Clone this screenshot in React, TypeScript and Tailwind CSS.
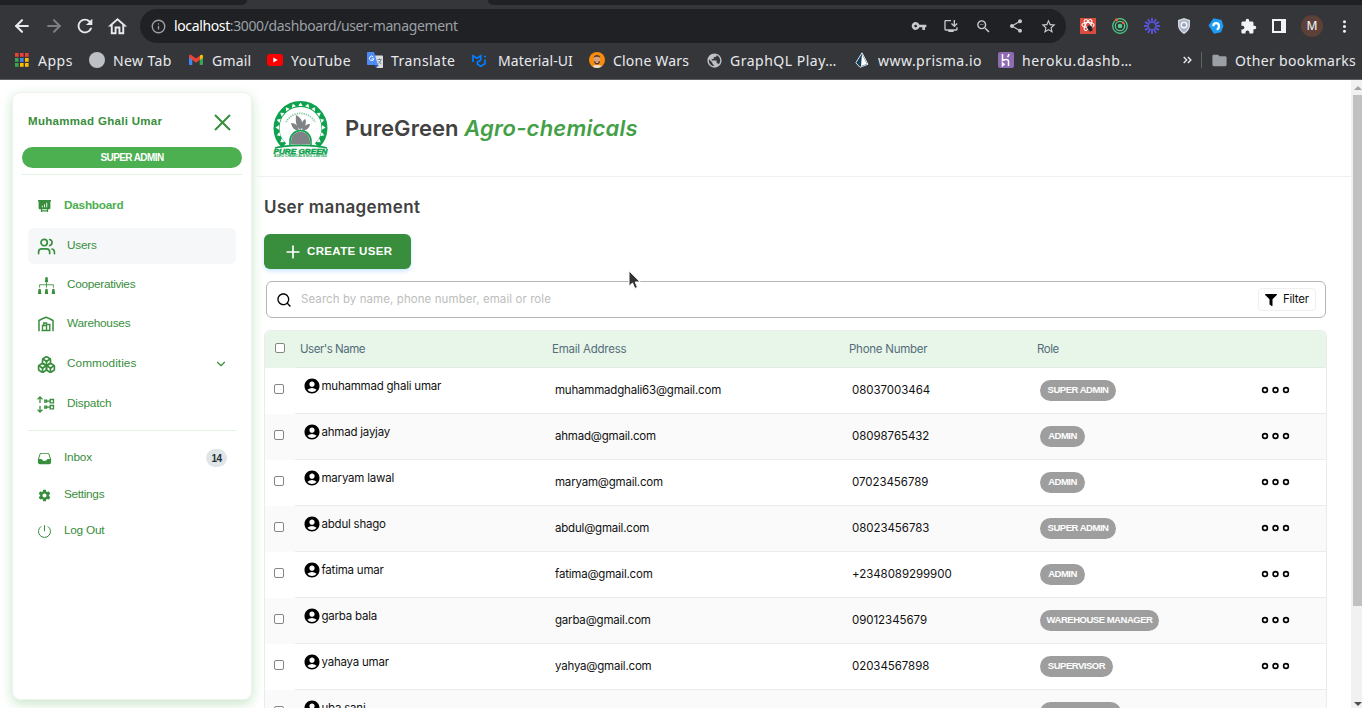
import React from 'react';
import { ArrowLeft, ArrowRight, Boxes, ChevronDown, Info, Plus, Users } from 'lucide-react';
import {
  MdAccountCircle, MdExtension, MdFolder, MdInstallDesktop, MdMoreVert,
  MdOutlineHome, MdPublic, MdRefresh, MdShare, MdStarBorder, MdVpnKey, MdZoomOut,
} from 'react-icons/md';
import { HiInbox } from 'react-icons/hi2';
import { FaFilter } from 'react-icons/fa';
import { IoSettingsSharp } from 'react-icons/io5';
import { RiSearchLine } from 'react-icons/ri';

const AppsIcon = () => (
  <svg width="14" height="14" viewBox="0 0 14 14">
    {['#ea4335', '#ea4335', '#ea4335', '#34a853', '#4285f4', '#fbbc04', '#34a853', '#fbbc04', '#fbbc04'].map((c, i) => (
      <rect key={i} x={(i % 3) * 5} y={Math.floor(i / 3) * 5} width="3.6" height="3.8" fill={c} />
    ))}
  </svg>
);

const GmailIcon = () => (
  <svg width="16" height="16" viewBox="0 0 16 16">
    <path d="M1 4v8.2c0 .5.3.8.8.8H4.300V6.600z" fill="#4285f4" />
    <path d="M15 4v8.2c0 .5-.3.8-.8.8H11.700V6.600z" fill="#34a853" />
    <path d="M1 4.2C1 2.900 2.600 2.400 3.600 3.200L8 6.600l4.400-3.400V7.200L8 10.800 3.800 7.500 1 5.200z" fill="#ea4335" />
    <path d="M12 3.400c1.100-1 3-.6 3 .8v1.500l-3 2.200z" fill="#fbbc04" />
  </svg>
);

const YouTubeIcon = () => (
  <svg width="16" height="12" viewBox="0 0 16 12">
    <rect width="16" height="12" rx="3" fill="#f00" />
    <path d="M6.300 3.400v5.200L10.700 6z" fill="#fff" />
  </svg>
);

const TranslateIcon = () => (
  <svg width="16" height="16" viewBox="0 0 16 16">
    <path d="M6 3.500h9.300c.4 0 .7.300.7.700v11c0 .4-.3.800-.7.800H9.500z" fill="#dadce0" />
    <path d="M8 13h4l-3 3z" fill="#3b5bbd" />
    <path d="M.800 0H7l4 13H.800C.300 13 0 12.700 0 12.300V.800C0 .300.300 0 .800 0z" fill="#4c8bf5" />
    <path d="M6.300 4.900a2.200 2.200 0 1 0 .5 1.900H4.700" fill="none" stroke="#fff" strokeWidth="1" />
    <path d="M10.500 7.500h4M12.500 6.500v1M14 7.800c-.5 2-1.500 3-2.700 4M11.500 9l2.800 3" fill="none" stroke="#71808d" strokeWidth=".9" />
  </svg>
);

const MuiIcon = () => (
  <svg width="15" height="13" viewBox="0 0 15 13" fill="none" stroke="#007fff" strokeWidth="1.700">
    <path d="M1 8V1.800l4 2.500 3.700-2.500V6L5.500 8v2.300l3.300 1.900 4.200-2.400V5.500" />
    <path d="M12 2.500h2" />
  </svg>
);

const FaceIcon = () => (
  <svg width="16" height="16" viewBox="0 0 16 16">
    <circle cx="8" cy="8" r="8" fill="#f98c0a" />
    <path d="M3.500 14.500c1-2 8-2 9 0C10.500 16.400 5.500 16.400 3.500 14.500z" fill="#e8dfd8" />
    <ellipse cx="8" cy="7.500" rx="3.200" ry="4.800" fill="#d8a17f" />
    <path d="M4.700 6C4.300 2 11.700 2 11.300 6 10.600 4.400 5.400 4.400 4.700 6zM4.900 9c.2 4.800 6 4.800 6.200 0-1 1.100-5.200 1.100-6.200 0z" fill="#593624" />
    <path d="M6.700 10.300h2.600" stroke="#fff" strokeWidth=".8" />
  </svg>
);

const PrismaIcon = () => (
  <svg width="14" height="16" viewBox="0 0 14 16">
    <path d="M7 .8 13 12.300 5 15.300.8 10.800z" fill="#16405b" stroke="#dbe5ea" strokeWidth="1" />
    <path d="M7 2 12 12 6 14z" fill="#fff" />
  </svg>
);

const HerokuIcon = () => (
  <svg width="16" height="16" viewBox="0 0 16 16">
    <rect width="16" height="16" rx="2" fill="#8f6bb3" />
    <path d="M4.500 2v6.700c3-1.500 6-1.700 6 .6V14M10.800 2c0 1.300-.5 2.200-1.300 3M4.500 11v2.600l1.600-1.300z" fill="none" stroke="#fff" strokeWidth="1.500" />
  </svg>
);

const BugExtension = () => (
  <svg width="16" height="16" viewBox="0 0 16 16">
    <rect width="16" height="16" fill="#dd4b3e" />
    <g fill="none" stroke="#fff" strokeWidth="1.100">
      <ellipse cx="8" cy="7" rx="6" ry="2.500" />
      <ellipse cx="8" cy="7" rx="6" ry="2.500" transform="rotate(60 8 7)" />
      <ellipse cx="8" cy="7" rx="6" ry="2.500" transform="rotate(120 8 7)" />
    </g>
    <ellipse cx="10" cy="10.300" rx="2.300" ry="3" fill="#222" transform="rotate(-35 10 10.300)" />
    <path d="M6.500 9l6 4M7.500 13l5-5M10 7v7" stroke="#222" strokeWidth=".7" />
  </svg>
);

const RingsExtension = () => (
  <svg width="16" height="16" viewBox="0 0 16 16" fill="none" stroke="#4fd18b">
    <circle cx="8" cy="8" r="7.300" strokeWidth="1.200" />
    <circle cx="8" cy="8" r="4.700" strokeWidth="1.200" />
    <circle cx="8" cy="8" r="2.300" fill="#4fd18b" stroke="none" />
    <circle cx="4.500" cy="1.700" r="1.500" fill="#f06033" stroke="none" />
    <circle cx="11.200" cy="4.800" r="1.300" fill="#f06033" stroke="none" />
  </svg>
);

const BurstExtension = () => (
  <svg width="16" height="16" viewBox="0 0 16 16" stroke="#5b57ea" strokeWidth="1.700">
    {[0, 30, 60, 90, 120, 150, 180, 210, 240, 270, 300, 330].map((a) => (
      <path key={a} d="M8 0v4.900" transform={`rotate(${a} 8 8)`} />
    ))}
  </svg>
);

const ShieldExtension = () => (
  <svg width="14" height="16" viewBox="0 0 14 16">
    <path d="M7 0 13 2v5c0 4-2.500 7-6 9-3.500-2-6-5-6-9V2z" fill="#d5d9e2" />
    <path d="M7 1.500 11.700 3v4c0 3.200-2 5.800-4.700 7.500C4.300 12.800 2.300 10.200 2.300 7V3z" fill="#a9b3c5" />
    <circle cx="7" cy="7" r="2.800" fill="#9aa6ba" stroke="#f5f6fa" strokeWidth="1.400" />
  </svg>
);

const BlueExtension = () => (
  <svg width="16" height="16" viewBox="0 0 16 16">
    <path d="M5.500.3 13.500 2l2 6-2.500 6.300L6 15.700.500 7.500z" fill="#1e9cf5" />
    <path d="M5.300 8.300C5.300 4 11 4 11 8.300c0 1.700-.8 2.800-2.300 3" fill="none" stroke="#fff" strokeWidth="2.200" />
  </svg>
);

const BoardIcon = () => (
  <svg width="13" height="13" viewBox="0 0 13 13" fill="none">
    <path d="M0 0h13v1.300h-.6V8c0 .8-.5 1.300-1.300 1.300H1.900C1.100 9.300.6 8.800.6 8V1.300H0z" fill="#388e3c" />
    <path d="M4.300 7.300V5.700M6.500 7.300V4.300M8.700 7.300V2.700" stroke="#fff" strokeWidth=".9" />
    <path d="M3.500 9v3M9.500 9v3M3.500 10.800h6" stroke="#388e3c" strokeWidth="1.200" />
  </svg>
);

const PEOPLE = [[8, 0], [1.5, 11], [8, 11], [14.5, 11]];
const TreeIcon = () => (
  <svg width="17" height="17" viewBox="0 0 16 16" fill="#388e3c">
    {PEOPLE.map(([x, y]) => (
      <path key={`${x}-${y}`} d={`M${x - 1.2} ${y + 1.2}a1.2 1.2 0 0 1 2.4 0v.8l.4 3h-3.200l.4-3z`} />
    ))}
    <path d="M8 5v5M1.500 10V7.300h13V10" fill="none" stroke="#388e3c" strokeWidth=".8" />
  </svg>
);

const WarehouseIcon = () => (
  <svg width="16" height="16" viewBox="0 0 16 16" fill="none" stroke="#388e3c">
    <path d="M1 15.300V4.500C3 3.200 5.500 2 8 1.200c2.500.8 5 2 7 3.300v10.800" strokeWidth="1.500" />
    <path d="M4.500 9.500h4v5h-4zM8.500 8.500h3.300v6H8.500M5.800 9.500V7h2.700v1.500M3.500 14.600h9" strokeWidth="1.400" />
  </svg>
);

const DispatchIcon = () => (
  <svg width="18" height="17" viewBox="0 0 18 17" fill="none" stroke="#388e3c" strokeWidth="1.300">
    <path d="M3 7V1M.500 3.400 3 1l2.500 2.400M3 10v6M.500 13.600 3 16l2.500-2.400" />
    <path d="M7.800 4.200h1.800v1.800H7.800zM9.800 5.100H13M13.200 3.500h3.300v3.300h-3.300z" />
    <path d="M7.800 10.200h1.800V12H7.800zM9.800 11.100H13M13.200 9.500h3.300v3.300h-3.300z" />
  </svg>
);

const PowerIcon = () => (
  <svg width="13" height="13" viewBox="0 0 13 13" fill="none" stroke="#388e3c" strokeWidth="1">
    <path d="M6.500.2v6M3.200 1.400a6 6 0 1 0 6.600 0" />
  </svg>
);

const Logo = () => (
  <svg width="56" height="59" viewBox="0 0 56 59">
    <path d="M11 46.500A24 24 0 1 1 44 46.500" fill="none" stroke="#0fa24e" strokeWidth="6" />
    {[-126, -108, -90, -72, -54, -36, -18, 0, 18, 36, 54, 72, 90, 108, 126].map((a) => (
      <path key={a} d="M25.300 7h4.400L27.500 3.500z" fill="#fff" transform={`rotate(${a} 27.500 28.500)`} />
    ))}
    <path d="M13 23A16.500 16.500 0 0 1 42 23" fill="none" stroke="#8ccaa5" strokeWidth="1.800" strokeDasharray="1.300 1" />
    <g fill="#808386">
      <path d="M27.500 31c-5-4-5-9-4.500-15 6 3 8 8 4.500 15zM28.500 30c-.5-5 1-9 4-10 1 4 0 8-4 10zM26 31.500c-5 0-7-3-8-7.500 5 0 7 3 8 7.500zM29 31.500c1-4 4-6.500 8-6.500-.5 4-3 6.500-8 6.500z" />
      <path d="M18 45.500V42a9.500 9.500 0 0 1 19 0v3.500z" />
    </g>
    <path d="M17 46v-4a10.500 10.500 0 0 1 21 0v4" fill="none" stroke="#0fa24e" strokeWidth="1.600" />
    <path d="M2 49c8-2.500 17-2.700 25.500-2.700S45 46.500 54 49" stroke="#0fa24e" strokeWidth="1.800" fill="none" />
    <text x="0.500" y="54.600" textLength="54" lengthAdjust="spacingAndGlyphs" fontFamily="Liberation Sans" fontWeight="900" fontStyle="italic" fontSize="7.600" fill="#0fa24e" stroke="#0fa24e" strokeWidth=".5">PURE GREEN</text>
    <text x="1" y="58.300" textLength="53" lengthAdjust="spacingAndGlyphs" fontFamily="Liberation Sans" fontWeight="700" fontSize="3.600" fill="#0fa24e">AGRO CHEMICALS NIG. LIMITED</text>
  </svg>
);

function Bookmark({ icon, label, className }: { icon: React.ReactNode; label: string; className: string }) {
  return (
    <div className={`flex h-full shrink-0 items-center whitespace-nowrap ${className}`}>
      <span className="flex w-4 shrink-0 items-center justify-center">{icon}</span>
      <span>{label}</span>
    </div>
  );
}

function BrowserChrome() {
  return (
    <header className="flex h-20 shrink-0 flex-col border-b border-[#5f6064] bg-[#35363a] font-['Noto_Sans',sans-serif] text-[#e8eaed]">
      <div className="flex h-[5px] shrink-0 justify-between">
        <div className="w-[247px] rounded-br-[5px] bg-[#202124]" />
        <div className="w-[874px] rounded-bl-[5px] bg-[#202124]" />
      </div>
      <div className="flex h-[42px] shrink-0 items-center">
        <div className="flex w-[140px] items-center pl-3">
          <ArrowLeft size={20} strokeWidth={2.5} />
          <ArrowRight size={20} strokeWidth={2.5} className="ml-3 text-[#7d7e82]" />
          <MdRefresh size={22} className="ml-2.5" />
          <MdOutlineHome size={23} className="ml-2.5" />
        </div>
        <div className="flex h-[34px] w-[926px] items-center rounded-full bg-[#202124] pl-[11px] text-[#c7c9cc]">
          <Info size={15} strokeWidth={2.2} className="text-[#9aa0a6]" />
          <div className="-mt-0.5 ml-2 grow text-[14px] tracking-[-0.370px] text-[#9aa0a6]">
            <span className="text-white">localhost</span>:3000/dashboard/user-management
          </div>
          <div className="flex items-center gap-4 pr-[9px]">
            <MdVpnKey size={16} />
            <MdInstallDesktop size={16} />
            <MdZoomOut size={17} />
            <MdShare size={16} />
            <MdStarBorder size={17} />
          </div>
        </div>
        <div className="flex items-center gap-4 pl-3.5">
          <BugExtension />
          <RingsExtension />
          <BurstExtension />
          <span className="flex w-4 justify-center"><ShieldExtension /></span>
          <BlueExtension />
          <MdExtension size={17} className="text-[#f1f3f4]" />
          <span className="-ml-px h-3.5 w-3.5 border-2 border-r-[5px] border-[#f1f3f4] bg-[#35363a]" />
          <span className="-ml-px flex size-[22px] items-center justify-center rounded-full bg-[#5d4037] text-[12px] font-medium">M</span>
          <MdMoreVert size={19} className="-ml-1" />
        </div>
      </div>
      <div className="-mt-px flex h-7 shrink-0 items-center text-[14px]">
        <Bookmark icon={<AppsIcon />} label="Apps" className="w-[75px] gap-2 pl-3.5 tracking-[0.500px]" />
        <Bookmark icon={<span className="size-4 rounded-full bg-[#bdc1c6]" />} label="New Tab" className="ml-3.5 w-[99px] gap-2 tracking-[0.400px]" />
        <Bookmark icon={<GmailIcon />} label="Gmail" className="w-[79px] gap-2 tracking-[0.200px]" />
        <Bookmark icon={<YouTubeIcon />} label="YouTube" className="w-[100px] gap-2 tracking-[0.500px]" />
        <Bookmark icon={<TranslateIcon />} label="Translate" className="w-[104px] gap-2 tracking-[0.450px]" />
        <Bookmark icon={<MuiIcon />} label="Material-UI" className="w-[118px] gap-[11px] tracking-[0.100px]" />
        <Bookmark icon={<FaceIcon />} label="Clone Wars" className="w-[117px] gap-2 tracking-[0.200px]" />
        <Bookmark icon={<MdPublic size={17} className="shrink-0 text-[#bdc1c6]" />} label="GraphQL Play…" className="w-[148px] gap-2 tracking-[0.500px]" />
        <Bookmark icon={<PrismaIcon />} label="www.prisma.io" className="w-[144px] gap-2 tracking-[0.480px]" />
        <Bookmark icon={<HerokuIcon />} label="heroku.dashb…" className="w-[185px] gap-2 tracking-[0.650px]" />
        <svg width="9" height="8" viewBox="0 0 9 8" fill="none" stroke="#e8eaed" strokeWidth="1.400" className="shrink-0">
          <path d="m.7.900 3 3-3 3M4.900.900l3 3-3 3" />
        </svg>
        <span className="ml-[9px] h-4 w-px shrink-0 bg-[#5f6368]" />
        <Bookmark icon={<MdFolder size={17} className="shrink-0 text-[#9aa0a6]" />} label="Other bookmarks" className="ml-[9px] gap-2 tracking-[0.350px]" />
      </div>
    </header>
  );
}

function NavItem({ icon, label, className, end }: { icon: React.ReactNode; label: string; className: string; end?: React.ReactNode }) {
  return (
    <li className={`flex items-center rounded-md ${className}`}>
      <span className="flex w-[18px] shrink-0 items-center justify-center">{icon}</span>
      <span className="-mt-px">{label}</span>
      {end}
    </li>
  );
}

function Sidebar() {
  return (
    <aside className="mt-3 ml-3 flex h-[608px] w-[240px] shrink-0 flex-col rounded-lg border border-[#eef3ee] bg-white px-[9px] font-['Liberation_Sans',sans-serif] text-[11.800px] text-[#388e3c] shadow-[0_4px_12px_rgba(76,175,80,0.300)]">
      <div className="flex h-[54px] items-center justify-between pt-1 pr-[11px] pl-1.5">
        <h2 className="text-[11.500px] font-bold tracking-[0.310px]">Muhammad Ghali Umar</h2>
        <svg width="17" height="17" viewBox="0 0 17 17" stroke="#388e3c" strokeWidth="2"><path d="m1 1 15 15M16 1 1 16" /></svg>
      </div>
      <div className="flex h-[21px] shrink-0 items-center justify-center rounded-full bg-[#4caf50] text-[10px] font-bold tracking-[-0.600px] text-white">SUPER ADMIN</div>
      <div className="mt-1.5 h-px bg-[#e3f3e4]" />
      <ul className="mx-1.5">
        <NavItem icon={<BoardIcon />} label="Dashboard" className="mt-[13px] h-9 gap-[11px] pl-[7px] font-bold tracking-[-0.250px] text-[#4caf50]" />
        <NavItem icon={<Users size={19} strokeWidth={2.1} className="shrink-0" />} label="Users" className="mt-1 h-9 gap-3 bg-[#f5f7f9] pl-[9px] tracking-[-0.250px]" />
        <NavItem icon={<TreeIcon />} label="Cooperativies" className="mt-[3px] h-9 gap-3 pl-[9px] tracking-[-0.300px]" />
        <NavItem icon={<WarehouseIcon />} label="Warehouses" className="mt-[3px] h-9 gap-3 pl-[9px] tracking-[-0.250px]" />
        <NavItem
          icon={<Boxes size={19} strokeWidth={2.1} className="shrink-0" />}
          label="Commodities"
          className="mt-1 h-9 gap-3 pr-2 pl-[9px] tracking-[0.050px]"
          end={<ChevronDown size={14} className="ml-auto" />}
        />
        <NavItem icon={<DispatchIcon />} label="Dispatch" className="mt-1 h-9 gap-3 pl-[9px] tracking-[-0.200px]" />
      </ul>
      <div className="mx-1.5 mt-2 h-px bg-[#e3f3e4]" />
      <ul className="mx-1.5">
        <NavItem
          icon={<HiInbox size={15} className="shrink-0" />}
          label="Inbox"
          className="mt-[9px] h-9 gap-[11px] pr-[9px] pl-[7px] tracking-[-0.200px]"
          end={<span className="ml-auto flex h-[18px] w-[21px] items-center justify-center rounded-full bg-[#dfe5e9] text-[10px] font-bold tracking-[-0.500px] text-[#263238]">14</span>}
        />
        <NavItem icon={<IoSettingsSharp size={13} />} label="Settings" className="mt-px h-9 gap-[11px] pl-[7px] tracking-[-0.300px]" />
        <NavItem icon={<PowerIcon />} label="Log Out" className="h-9 gap-[11px] pl-[7px] tracking-[-0.250px]" />
      </ul>
    </aside>
  );
}

const COLUMNS = 'grid grid-cols-[30px_252px_297px_188px_222px_1fr]';

const ROWS = [
  { name: 'muhammad ghali umar', email: 'muhammadghali63@gmail.com', phone: '08037003464', role: 'SUPER ADMIN', badge: 'w-[76px]' },
  { name: 'ahmad jayjay', email: 'ahmad@gmail.com', phone: '08098765432', role: 'ADMIN', badge: 'w-[45px]' },
  { name: 'maryam lawal', email: 'maryam@gmail.com', phone: '07023456789', role: 'ADMIN', badge: 'w-[45px]' },
  { name: 'abdul shago', email: 'abdul@gmail.com', phone: '08023456783', role: 'SUPER ADMIN', badge: 'w-[76px]' },
  { name: 'fatima umar', email: 'fatima@gmail.com', phone: '+2348089299900', role: 'ADMIN', badge: 'w-[45px]' },
  { name: 'garba bala', email: 'garba@gmail.com', phone: '09012345679', role: 'WAREHOUSE MANAGER', badge: 'w-[119px]' },
  { name: 'yahaya umar', email: 'yahya@gmail.com', phone: '02034567898', role: 'SUPERVISOR', badge: 'w-[73px]' },
  { name: 'uba sani', email: '', phone: '', role: '', badge: 'w-[81px]' },
];

const CHECKBOX = 'block size-2.5 rounded-[2px] border border-[#858585] bg-white';
const HEAD_CELL = 'flex items-center border-b border-[#e4ebe6] pt-0.5 pl-[5px]';

function UserTable() {
  return (
    <section className="mt-3 w-[1063px] rounded-t-md border border-b-0 border-[#ebebeb] text-[11.500px] text-[#111]">
      <div className={`${COLUMNS} h-[37px] rounded-t-md bg-[#e8f5e9] text-[#546e7a]`}>
        <div className="pt-3 pl-2.5"><span className={CHECKBOX} /></div>
        <div className={`${HEAD_CELL} tracking-[-0.480px]`}><span>User's Name</span></div>
        <div className={`${HEAD_CELL} tracking-[-0.220px]`}>Email Address</div>
        <div className={`${HEAD_CELL} tracking-[-0.250px]`}>Phone Number</div>
        <div className={`${HEAD_CELL} tracking-[-0.450px]`}>Role</div>
        <div className="border-b border-[#e4ebe6]" />
      </div>
      {ROWS.map((row, i) => (
        <div key={row.name} className={`${COLUMNS} h-[46px] ${i % 2 ? 'bg-[#fafafa]' : 'bg-white'}`}>
          <div className="pt-4 pl-[9px]"><span className={CHECKBOX} /></div>
          <div className="flex items-start border-b border-[#ebebeb] pt-[9px] pl-[7.500px] leading-[19px]">
            <MdAccountCircle size={18} className="shrink-0 text-black" />
            <span className="ml-px tracking-[-0.220px]">{row.name}</span>
          </div>
          <div className="flex items-center border-b border-[#ebebeb] pt-px pl-2 tracking-[-0.200px]">{row.email}</div>
          <div className="flex items-center border-b border-[#ebebeb] pt-px pl-2 tracking-[-0.050px]">{row.phone}</div>
          <div className="flex items-center border-b border-[#ebebeb] pl-2">
            <span className={`flex h-[21px] items-center justify-center rounded-full bg-[#9e9e9e] pb-px font-['Liberation_Sans',sans-serif] text-[9.500px] font-bold tracking-[-0.480px] text-white ${row.badge}`}>
              {row.role}
            </span>
          </div>
          <div className="flex items-center border-b border-[#ebebeb] pb-0.5 pl-[7px]">
            <svg width="29" height="8" viewBox="0 0 29 8" fill="none" stroke="#000" strokeWidth="1.600">
              <circle cx="4" cy="4" r="2.400" />
              <circle cx="14.500" cy="4" r="2.400" />
              <circle cx="25" cy="4" r="2.400" />
            </svg>
          </div>
        </div>
      ))}
    </section>
  );
}

function MainContent() {
  return (
    <main className="flex min-w-0 grow flex-col">
      <div className="flex h-[97px] shrink-0 items-center border-b border-[#f0f0f0] pl-[21px]">
        <Logo />
        <h1 className="ml-4 text-[22px] font-semibold tracking-[0.050px] text-[#424242]">
          PureGreen <em className="text-[#43a047] tracking-[0.220px]">Agro-chemicals</em>
        </h1>
      </div>
      <div className="flex flex-col pl-3">
        <h2 className="mt-4 text-[17px] leading-7 font-semibold tracking-[0.380px] text-[#424242]">User management</h2>
        <button className="mt-[13px] flex h-[35px] w-[147px] items-center rounded-md bg-[#388e3c] pl-[19px] font-['Liberation_Sans',sans-serif] text-[11.500px] font-bold tracking-[0.350px] text-white shadow-[0_2px_4px_rgba(33,150,243,0.250)]">
          <Plus size={20} strokeWidth={2} className="mr-1" />
          CREATE USER
        </button>
        <div className="mt-3 ml-0.5 flex h-[37px] w-[1060px] items-center rounded-md border border-[#b5b5b5] pr-[9px] pl-[9px] text-[11.500px]">
          <RiSearchLine size={16} className="text-black" />
          <span className="ml-[9px] grow tracking-[0.080px] text-[#bdbdbd]">Search by name, phone number, email or role</span>
          <span className="flex h-[23px] w-[58px] items-center gap-1.5 rounded border border-[#efefef] pl-1.5 tracking-[-0.250px] text-[#111]">
            <FaFilter size={12} className="shrink-0 text-black" />
            Filter
          </span>
        </div>
        <UserTable />
      </div>
    </main>
  );
}

function Scrollbar() {
  return (
    <div className="flex w-[11px] shrink-0 flex-col items-end bg-[#f1f1f1]">
      <svg width="9" height="15" viewBox="0 0 9 15" fill="#a3a3a3"><path d="M1 10h8L5 6z" /></svg>
      <div className="h-[511px] w-[9px] bg-[#c1c1c1]" />
      <svg width="9" height="15" viewBox="0 0 9 15" fill="#505050" className="mt-auto"><path d="M1 9h8l-4 4z" /></svg>
    </div>
  );
}

export default function App() {
  return (
    <div className="relative flex h-[708px] w-[1362px] flex-col overflow-hidden bg-white font-['Inter',sans-serif]">
      <BrowserChrome />
      <div className="flex h-[628px] shrink-0 overflow-hidden">
        <Sidebar />
        <MainContent />
        <Scrollbar />
      </div>
      <svg width="14" height="20" viewBox="0 0 14 20" className="absolute top-[270px] left-[628px]">
        <path d="M1 .8v15.500l3.500-3.300 2.300 5.500 2.700-1.200-2.300-5.300h5z" fill="#333" stroke="#fff" strokeWidth="1" />
      </svg>
    </div>
  );
}
